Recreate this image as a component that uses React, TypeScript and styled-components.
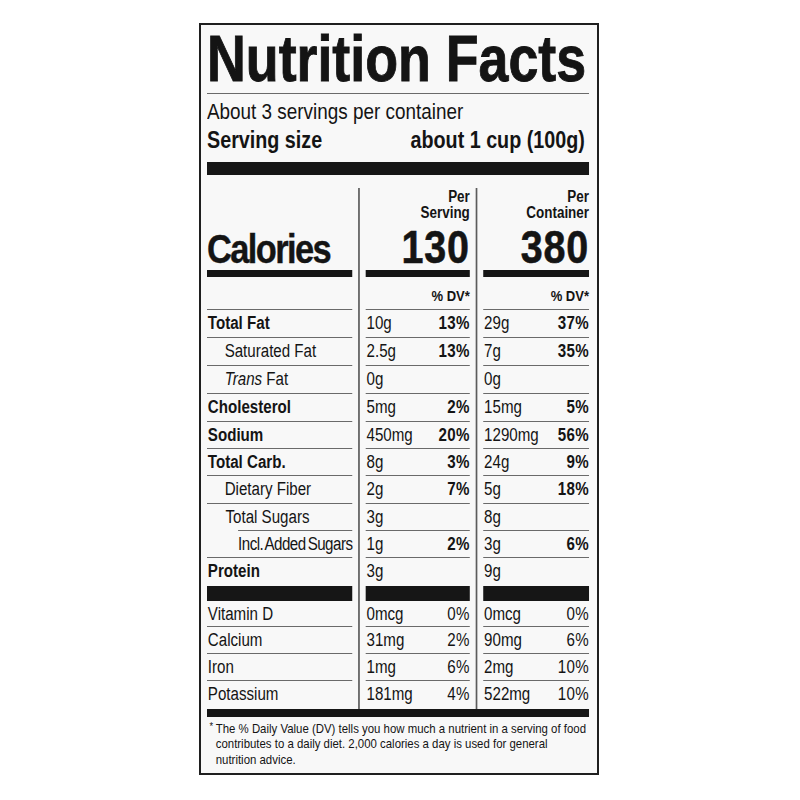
import React from "react";
import styled, { createGlobalStyle, css } from "styled-components";

const SQUEEZE = 0.8396;

const GlobalStyle = createGlobalStyle`
  html, body {
    margin: 0;
    padding: 0;
    background: #ffffff;
  }
  body {
    font-family: "Liberation Sans", Arial, Helvetica, sans-serif;
    color: #141414;
  }
`;

const Page = styled.main`
  padding: 23px 0 0 199px;
`;

const Label = styled.section`
  width: 400px;
  box-sizing: border-box;
  border: 2px solid #1f1f1f;
  background: #f8f8f8;
  padding: 2px 8px 6px 6px;
`;

/* the label type is a condensed grotesque: the whole panel is drawn wide and squeezed */
const Squeeze = styled.div`
  width: 455px;
  transform: scaleX(${SQUEEZE});
  transform-origin: 0 0;
`;

const Title = styled.h1`
  margin: 0;
  font-size: 64px;
  line-height: 64px;
  font-weight: 700;
  white-space: nowrap;
  -webkit-text-stroke: 0.9px #141414;
`;

const Hairline = styled.div`
  height: 1px;
  margin-top: 2px;
  background: #6a6a6a;
`;

const Servings = styled.div`
  margin-top: 6px;
  font-size: 22.5px;
  line-height: 24px;
  white-space: nowrap;
`;

const ServingSize = styled.div`
  display: flex;
  justify-content: space-between;
  margin-top: 3px;
  padding-right: 5px;
  font-size: 23.5px;
  line-height: 26px;
  font-weight: 700;
  white-space: nowrap;
`;

const Bar = styled.div<{ $h: number; $mt?: number }>`
  height: ${(p) => p.$h}px;
  margin-top: ${(p) => p.$mt ?? 0}px;
  background: #161616;
`;

const ROW_HEIGHTS = [89, 33, 28, 28, 28, 28, 27, 27, 28, 27, 27, 43, 26, 27, 27, 28];

const Table = styled.div`
  display: grid;
  grid-template-columns: 173px 16px 124px 16px 126px;
  grid-template-rows: ${ROW_HEIGHTS.map((h) => `${h}px`).join(" ")};
  margin-top: 13px;
`;

const Divider = styled.div<{ $col: number }>`
  grid-column: ${(p) => p.$col};
  grid-row: 1 / -1;
  justify-self: center;
  width: 1.2px;
  background: #5c5c5c;
`;

type Rule = "thin" | "cal" | "bar" | "none" | "inset";

const ruleStyle = (rule: Rule, inset: number) => {
  switch (rule) {
    case "cal":
      return css`border-bottom: 7px solid #161616;`;
    case "bar":
      return css`border-bottom: 15px solid #161616;`;
    case "none":
      return css`border-bottom: 0;`;
    case "inset":
      return css`
        border-bottom: 0;
        background: linear-gradient(#6a6a6a, #6a6a6a) no-repeat right bottom / calc(100% - ${inset}px) 1px;
      `;
    default:
      return css`border-bottom: 1px solid #6a6a6a;`;
  }
};

const Cell = styled.div<{ $col: number; $rule?: Rule; $inset?: number }>`
  grid-column: ${(p) => p.$col};
  box-sizing: border-box;
  min-width: 0;
  ${(p) => ruleStyle(p.$rule ?? "thin", p.$inset ?? 0)}
`;

const CalLabelCell = styled(Cell)`
  display: flex;
  align-items: flex-end;
`;

const Calories = styled.div`
  font-size: 41px;
  line-height: 42px;
  font-weight: 700;
  letter-spacing: -1.9px;
  -webkit-text-stroke: 0.4px #141414;
`;

const CalValueCell = styled(Cell)`
  display: flex;
  flex-direction: column;
  justify-content: flex-end;
  align-items: flex-end;
  text-align: right;
`;

const PerHead = styled.div`
  font-size: 16px;
  line-height: 16px;
  font-weight: 700;
  margin-bottom: 4px;
`;

const BigNum = styled.div`
  font-size: 47px;
  line-height: 44px;
  font-weight: 700;
  letter-spacing: 1px;
  padding-bottom: 1px;
  -webkit-text-stroke: 0.6px #141414;
`;

const DVCell = styled(Cell)`
  display: flex;
  align-items: flex-end;
  justify-content: flex-end;
  padding-bottom: 5px;
  font-size: 15.5px;
  line-height: 16px;
  font-weight: 700;
`;

const NutLabel = styled(Cell)<{ $indent: number; $bold?: boolean }>`
  padding: 3px 0 0 ${(p) => p.$indent}px;
  font-size: 18px;
  line-height: 20px;
  font-weight: ${(p) => (p.$bold ? 700 : 400)};
  white-space: nowrap;
  ${(p) =>
    p.$indent > 30 &&
    css`
      letter-spacing: -0.6px;
      word-spacing: -2px;
    `}
`;

const NutValue = styled(Cell)`
  display: flex;
  justify-content: space-between;
  padding: 3px 0 0 1px;
  font-size: 18px;
  line-height: 20px;
  white-space: nowrap;
`;

const Pct = styled.span<{ $bold: boolean }>`
  font-weight: ${(p) => (p.$bold ? 700 : 400)};
  letter-spacing: 0.4px;
`;

const Footnote = styled.p`
  margin: 0;
  padding: 4px 0 0 10.4px;
  text-indent: -7.4px;
  font-size: 13.6px;
  line-height: 15.3px;
  white-space: nowrap;
`;

const Star = styled.span`
  display: inline-block;
  width: 7.4px;
  text-indent: 0;
  font-size: 11px;
  line-height: 10px;
  vertical-align: 3px;
`;

type Nutrient = {
  label: React.ReactNode;
  indent: number;
  bold?: boolean;
  rule?: Rule;
  inset?: number;
  serving: [string, string];
  container: [string, string];
  boldPct: boolean;
};

const NUTRIENTS: Nutrient[] = [
  { label: "Total Fat", indent: 1, bold: true, serving: ["10g", "13%"], container: ["29g", "37%"], boldPct: true },
  { label: "Saturated Fat", indent: 21, serving: ["2.5g", "13%"], container: ["7g", "35%"], boldPct: true },
  {
    label: (
      <>
        <i>Trans</i> Fat
      </>
    ),
    indent: 21,
    serving: ["0g", ""],
    container: ["0g", ""],
    boldPct: true,
  },
  { label: "Cholesterol", indent: 1, bold: true, serving: ["5mg", "2%"], container: ["15mg", "5%"], boldPct: true },
  { label: "Sodium", indent: 1, bold: true, serving: ["450mg", "20%"], container: ["1290mg", "56%"], boldPct: true },
  { label: "Total Carb.", indent: 1, bold: true, serving: ["8g", "3%"], container: ["24g", "9%"], boldPct: true },
  { label: "Dietary Fiber", indent: 21, serving: ["2g", "7%"], container: ["5g", "18%"], boldPct: true },
  { label: "Total Sugars", indent: 22, rule: "inset", inset: 37, serving: ["3g", ""], container: ["8g", ""], boldPct: true },
  { label: "Incl. Added Sugars", indent: 37, serving: ["1g", "2%"], container: ["3g", "6%"], boldPct: true },
  { label: "Protein", indent: 1, bold: true, rule: "bar", serving: ["3g", ""], container: ["9g", ""], boldPct: true },
  { label: "Vitamin D", indent: 1, serving: ["0mcg", "0%"], container: ["0mcg", "0%"], boldPct: false },
  { label: "Calcium", indent: 1, serving: ["31mg", "2%"], container: ["90mg", "6%"], boldPct: false },
  { label: "Iron", indent: 1, serving: ["1mg", "6%"], container: ["2mg", "10%"], boldPct: false },
  { label: "Potassium", indent: 1, rule: "none", serving: ["181mg", "4%"], container: ["522mg", "10%"], boldPct: false },
];

function NutrientRow({ n }: { n: Nutrient }) {
  const valueRule: Rule = n.rule === "inset" ? "thin" : n.rule ?? "thin";
  return (
    <>
      <NutLabel $col={1} $indent={n.indent} $bold={n.bold} $rule={n.rule} $inset={n.inset}>
        {n.label}
      </NutLabel>
      <NutValue $col={3} $rule={valueRule}>
        <span>{n.serving[0]}</span>
        <Pct $bold={n.boldPct}>{n.serving[1]}</Pct>
      </NutValue>
      <NutValue $col={5} $rule={valueRule}>
        <span>{n.container[0]}</span>
        <Pct $bold={n.boldPct}>{n.container[1]}</Pct>
      </NutValue>
    </>
  );
}

export default function App() {
  return (
    <>
      <GlobalStyle />
      <Page>
        <Label>
          <Squeeze>
            <Title>Nutrition Facts</Title>
            <Hairline />
            <Servings>About 3 servings per container</Servings>
            <ServingSize>
              <span>Serving size</span>
              <span>about 1 cup (100g)</span>
            </ServingSize>
            <Bar $h={13} $mt={9} />
            <Table>
              <Divider $col={2} />
              <Divider $col={4} />

              <CalLabelCell $col={1} $rule="cal">
                <Calories>Calories</Calories>
              </CalLabelCell>
              <CalValueCell $col={3} $rule="cal">
                <PerHead>
                  Per
                  <br />
                  Serving
                </PerHead>
                <BigNum>130</BigNum>
              </CalValueCell>
              <CalValueCell $col={5} $rule="cal">
                <PerHead>
                  Per
                  <br />
                  Container
                </PerHead>
                <BigNum>380</BigNum>
              </CalValueCell>

              <Cell $col={1} />
              <DVCell $col={3}>% DV*</DVCell>
              <DVCell $col={5}>% DV*</DVCell>

              {NUTRIENTS.map((n, i) => (
                <NutrientRow key={i} n={n} />
              ))}
            </Table>
            <Bar $h={8} />
            <Footnote>
              <Star>*</Star>The % Daily Value (DV) tells you how much a nutrient in a serving of food
              <br />
              contributes to a daily diet. 2,000 calories a day is used for general
              <br />
              nutrition advice.
            </Footnote>
          </Squeeze>
        </Label>
      </Page>
    </>
  );
}
